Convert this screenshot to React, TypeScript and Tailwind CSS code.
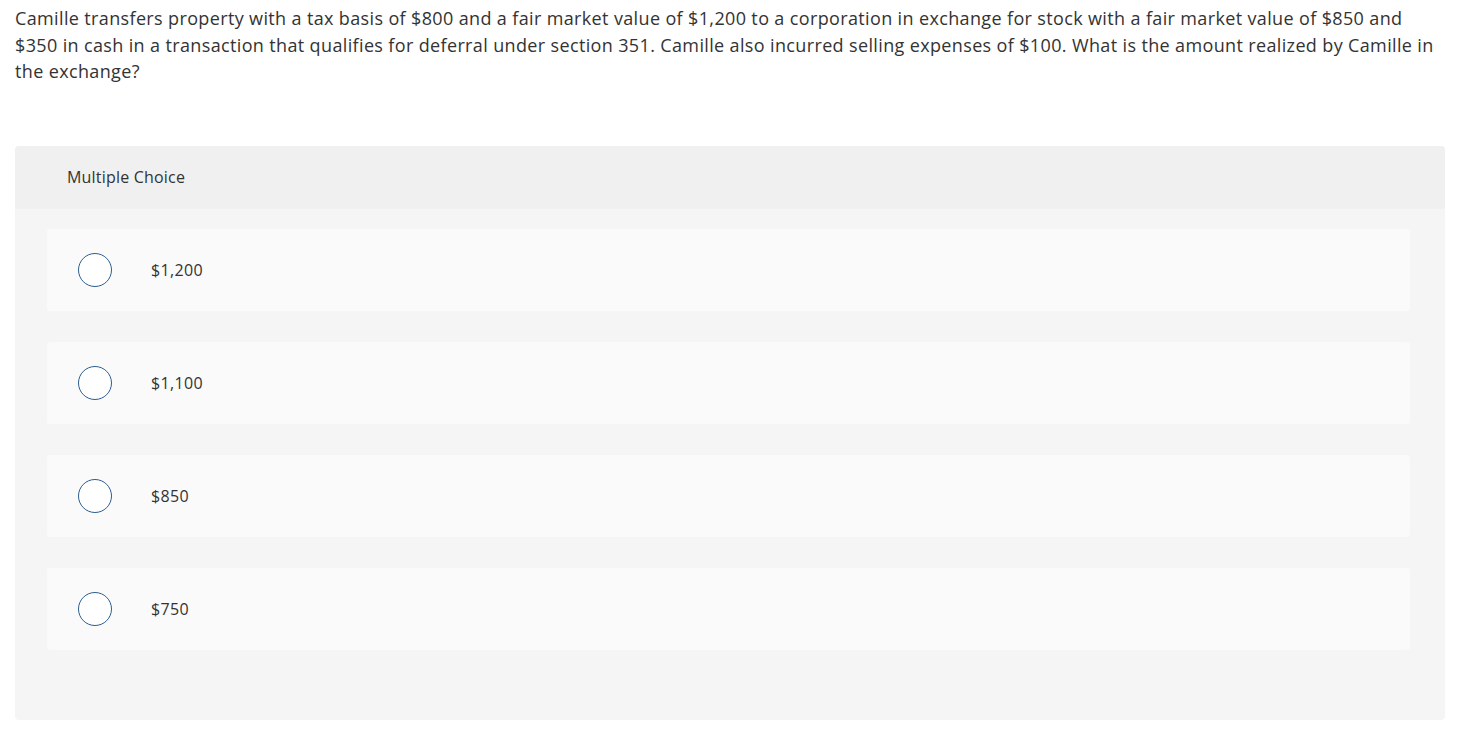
import React from "react";

const options = ["$1,200", "$1,100", "$850", "$750"];

export default function App() {
  return (
    <div className="min-h-[737px] bg-white px-[15px] pt-[5px] text-[#333]" style={{ fontFamily: '"Open Sans", "Liberation Sans", sans-serif' }}>
      <p className="w-[1425px] text-[18px] leading-[26.5px] tracking-[0.36px]">
        Camille transfers property with a tax basis of $800 and a fair market value of $1,200 to a corporation in exchange for stock with a fair market value of $850 and $350 in cash in a transaction that qualifies for deferral under section 351. Camille also incurred selling expenses of $100. What is the amount realized by Camille in the exchange?
      </p>
      <div className="mt-[61px] w-[1430px] rounded-[4px] bg-[#f5f5f5] overflow-hidden">
        <div className="h-[63px] bg-[#f0f0f0] flex items-center pl-[52px] text-[16px] tracking-[0.2px]">Multiple Choice</div>
        <div className="pt-[20px] pb-[70px] px-[32px] flex flex-col gap-[31px]">
          {options.map((o) => (
            <div key={o} className="h-[82px] w-[1363px] rounded-[3px] bg-[#fafafa] flex items-center">
              <div className="ml-[31px] w-[34px] h-[34px] rounded-full border border-[#2c5d91] bg-white" />
              <span className="ml-[39px] text-[16px] tracking-[0.35px]">{o}</span>
            </div>
          ))}
        </div>
      </div>
    </div>
  );
}
